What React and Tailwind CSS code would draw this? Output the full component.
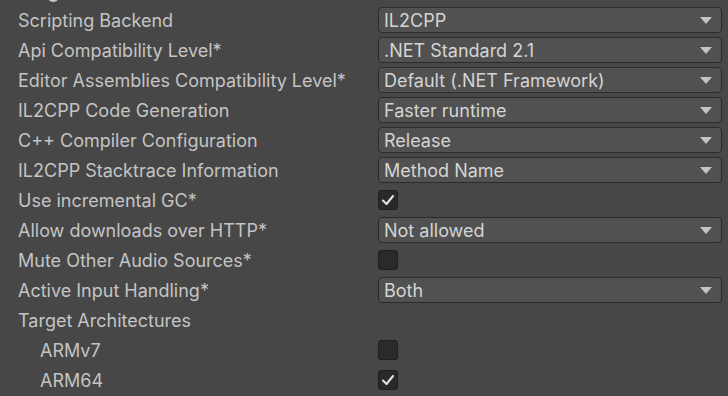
import React from 'react';

const rows = [
    { label: 'Scripting Backend', type: 'select', value: 'IL2CPP' },
    { label: 'Api Compatibility Level*', type: 'select', value: '.NET Standard 2.1' },
    { label: 'Editor Assemblies Compatibility Level*', type: 'select', value: 'Default (.NET Framework)' },
    { label: 'IL2CPP Code Generation', type: 'select', value: 'Faster runtime' },
    { label: 'C++ Compiler Configuration', type: 'select', value: 'Release' },
    { label: 'IL2CPP Stacktrace Information', type: 'select', value: 'Method Name' },
    { label: 'Use incremental GC*', type: 'check', value: true },
    { label: 'Allow downloads over HTTP*', type: 'select', value: 'Not allowed' },
    { label: 'Mute Other Audio Sources*', type: 'check', value: false },
    { label: 'Active Input Handling*', type: 'select', value: 'Both' },
    { label: 'Target Architectures', type: 'none' },
    { label: 'ARMv7', type: 'check', value: false, indent: true },
    { label: 'ARM64', type: 'check', value: true, indent: true },
];

const Dropdown = ({ value }) => (
    <div className="flex-1 h-[26px] flex items-center justify-between pl-[5px] pr-[9px] bg-[#515151] border border-[#2b2b2b] rounded-[4px] text-[#d4d4d4]">
        <span>{value}</span>
        <svg width="12" height="7" viewBox="0 0 12 7">
            <path d="M0 0 H12 L6 7 Z" fill="#c4c4c4" />
        </svg>
    </div>
);

const Checkbox = ({ checked }) => (
    <div className="w-[20px] h-[20px] flex items-center justify-center bg-[#2a2a2a] border border-[#1f1f1f] rounded-[3px]">
        {checked && (
            <svg width="14" height="12" viewBox="0 0 14 12">
                <path d="M2 6.5 L5.5 10 L12 2" stroke="#e6e6e6" strokeWidth="2" fill="none" strokeLinecap="round" strokeLinejoin="round" />
            </svg>
        )}
    </div>
);

export default function App() {
    return (
        <div className="w-[728px] h-[396px] overflow-hidden bg-[#474747] text-[#c4c4c4] text-[18px]" style={{ fontFamily: 'Inter, "Noto Sans", sans-serif' }}>
            <div className="h-[27px] -mt-[22px] flex items-center font-bold text-[#c8c8c8]">Configuration</div>
            {rows.map((row) => (
                <div key={row.label} className="h-[30px] flex items-center">
                    <div className={(row.indent ? 'pl-[40px]' : 'pl-[18px]') + ' w-[378px] shrink-0 whitespace-nowrap'}>
                        {row.label}
                    </div>
                    <div className="flex-1 flex items-center pr-[6px]">
                        {row.type === 'select' && <Dropdown value={row.value} />}
                        {row.type === 'check' && <Checkbox checked={row.value} />}
                    </div>
                </div>
            ))}
        </div>
    );
}
